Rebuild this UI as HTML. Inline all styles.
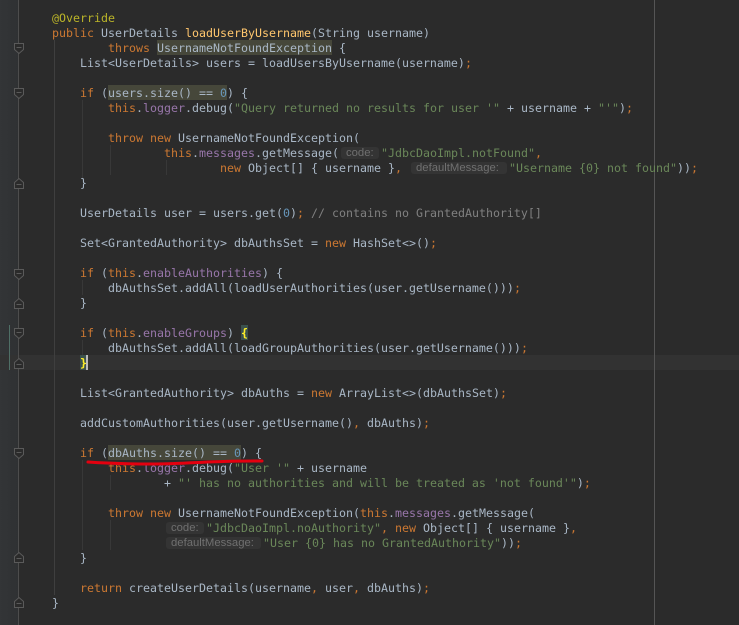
<!DOCTYPE html>
<html><head><meta charset="utf-8"><style>
html,body{margin:0;padding:0;background:#2b2b2b}
#r{position:relative;width:739px;height:625px;overflow:hidden;background:#2b2b2b}
#g{position:absolute;left:0;top:0;width:18px;height:625px;background:linear-gradient(90deg,#333537,#2f3133)}
.b{position:absolute}
#c{position:absolute;left:0;top:0;width:739px;height:625px;filter:blur(.35px)}
.l{position:absolute;left:52px;top:calc(11px + 15px*var(--n));height:15px;line-height:15px;font:11.63px/15px "DejaVu Sans Mono","Liberation Mono",monospace;white-space:pre;color:#a9b7c6}
.k{color:#cc7832}.s{color:#6a8759}.f{color:#9876aa}.a{color:#bbb529}.m{color:#ffc66d}.d{color:#6897bb}.c{color:#808080}
.t{position:absolute;top:calc(12px + 15px*var(--n));height:12px;line-height:12px;font:11.3px/12px "Liberation Sans",sans-serif;color:#707070;background:#343434;border-radius:3px;padding-left:5px;box-sizing:border-box;white-space:pre;overflow:hidden}
</style></head><body><div id="r">
<div id="g"></div>
<div class="b" style="left:0;top:355px;width:739px;height:15px;background:#323232"></div>
<div class="b" style="left:18px;top:0;width:1px;height:625px;background:#4d4d4d"></div>
<div class="b" style="left:54px;top:40px;width:1px;height:555px;background:#3f3f3f"></div>
<div class="b" style="left:654px;top:0;width:1px;height:625px;background:#555"></div>
<div class="b" style="left:82px;top:100px;width:1px;height:78px;background:#383838"></div>
<div class="b" style="left:110px;top:145px;width:1px;height:30px;background:#383838"></div>
<div class="b" style="left:166px;top:160px;width:1px;height:15px;background:#383838"></div>
<div class="b" style="left:82px;top:280px;width:1px;height:15px;background:#383838"></div>
<div class="b" style="left:82px;top:340px;width:1px;height:15px;background:#383838"></div>
<div class="b" style="left:82px;top:460px;width:1px;height:90px;background:#383838"></div>
<div class="b" style="left:110px;top:475px;width:1px;height:15px;background:#383838"></div>
<div class="b" style="left:110px;top:520px;width:1px;height:30px;background:#383838"></div>
<div class="b" style="left:9px;top:325px;width:1px;height:45px;background:#4f6f66"></div>
<div class="b" style="left:157px;top:40px;width:175px;height:15px;background:#46473a"></div>
<div class="b" style="left:108px;top:85px;width:119px;height:15px;background:#46473a"></div>
<div class="b" style="left:108px;top:445px;width:133px;height:15px;background:#46473a"></div>
<div class="b" style="left:241px;top:325px;width:7px;height:15px;background:#3b514d"></div>
<div class="b" style="left:80px;top:355px;width:7px;height:15px;background:#3b514d"></div>
<div class="b" style="left:86px;top:355px;width:2px;height:15px;background:#bbbbbb"></div>
<svg class="b" style="left:0;top:0" width="30" height="625" fill="#2b2b2b" stroke="#5a5a5a" stroke-width="1">
<path d="M14.500 43.500h9v6l-4.500 4-4.500-4zM16.500 47.500h5"/>
<path d="M14.500 88.500h9v6l-4.500 4-4.500-4zM16.500 92.500h5"/>
<path d="M14.500 188.500h9v-6l-4.500-4-4.500 4zM16.500 184.500h5"/>
<path d="M14.500 269.500h9v6l-4.500 4-4.500-4zM16.500 273.500h5"/>
<path d="M14.500 308.500h9v-6l-4.500-4-4.500 4zM16.500 304.500h5"/>
<path d="M14.500 328.500h9v6l-4.500 4-4.500-4zM16.500 332.500h5"/>
<path d="M14.500 368.500h9v-6l-4.500-4-4.500 4zM16.500 364.500h5"/>
<path d="M14.500 448.500h9v6l-4.500 4-4.500-4zM16.500 452.500h5"/>
<path d="M14.500 562.500h9v-6l-4.500-4-4.500 4zM16.500 558.500h5"/>
<path d="M14.500 607.500h9v-6l-4.500-4-4.500 4zM16.500 603.500h5"/>
</svg>
<div id="c">
<div class="l a" style="--n:0">@Override</div>
<div class="l" style="--n:1"><span class="k">public</span> UserDetails <span class="m">loadUserByUsername</span>(String username)</div>
<div class="l" style="--n:2">        <span class="k">throws</span> UsernameNotFoundException {</div>
<div class="l" style="--n:3">    List&lt;UserDetails&gt; users = loadUsersByUsername(username)<span class="k">;</span></div>
<div class="l" style="--n:5">    <span class="k">if</span> (users.size() == <span class="d">0</span>) {</div>
<div class="l" style="--n:6">        <span class="k">this</span>.<span class="f">logger</span>.debug(<span class="s">"Query returned no results for user '"</span> + username + <span class="s">"'"</span>)<span class="k">;</span></div>
<div class="l" style="--n:8">        <span class="k">throw new</span> UsernameNotFoundException(</div>
<div class="l" style="--n:9">                <span class="k">this</span>.<span class="f">messages</span>.getMessage(</div>
<div class="t" style="--n:9;left:341px;width:38px">code:</div>
<div class="l" style="--n:9;left:381px"><span class="s">"JdbcDaoImpl.notFound"</span><span class="k">,</span></div>
<div class="l" style="--n:10">                        <span class="k">new</span> Object[] { username }<span class="k">,</span></div>
<div class="t" style="--n:10;left:411px;width:96px">defaultMessage:</div>
<div class="l" style="--n:10;left:509px"><span class="s">"Username {0} not found"</span>))<span class="k">;</span></div>
<div class="l" style="--n:11">    }</div>
<div class="l" style="--n:13">    UserDetails user = users.get(<span class="d">0</span>)<span class="k">;</span> <span class="c">// contains no GrantedAuthority[]</span></div>
<div class="l" style="--n:15">    Set&lt;GrantedAuthority&gt; dbAuthsSet = <span class="k">new</span> HashSet&lt;&gt;()<span class="k">;</span></div>
<div class="l" style="--n:17">    <span class="k">if</span> (<span class="k">this</span>.<span class="f">enableAuthorities</span>) {</div>
<div class="l" style="--n:18">        dbAuthsSet.addAll(loadUserAuthorities(user.getUsername()))<span class="k">;</span></div>
<div class="l" style="--n:19">    }</div>
<div class="l" style="--n:21">    <span class="k">if</span> (<span class="k">this</span>.<span class="f">enableGroups</span>) <span style="color:#ffef28;font-weight:bold">{</span></div>
<div class="l" style="--n:22">        dbAuthsSet.addAll(loadGroupAuthorities(user.getUsername()))<span class="k">;</span></div>
<div class="l" style="--n:23">    <span style="color:#ffef28;font-weight:bold">}</span></div>
<div class="l" style="--n:25">    List&lt;GrantedAuthority&gt; dbAuths = <span class="k">new</span> ArrayList&lt;&gt;(dbAuthsSet)<span class="k">;</span></div>
<div class="l" style="--n:27">    addCustomAuthorities(user.getUsername()<span class="k">,</span> dbAuths)<span class="k">;</span></div>
<div class="l" style="--n:29">    <span class="k">if</span> (dbAuths.size() == <span class="d">0</span>) {</div>
<div class="l" style="--n:30">        <span class="k">this</span>.<span class="f">logger</span>.debug(<span class="s">"User '"</span> + username</div>
<div class="l" style="--n:31">                + <span class="s">"' has no authorities and will be treated as 'not found'"</span>)<span class="k">;</span></div>
<div class="l" style="--n:33">        <span class="k">throw new</span> UsernameNotFoundException(<span class="k">this</span>.<span class="f">messages</span>.getMessage(</div>
<div class="t" style="--n:34;left:166px;width:38px">code:</div>
<div class="l" style="--n:34;left:206px"><span class="s">"JdbcDaoImpl.noAuthority"</span><span class="k">, new</span> Object[] { username }<span class="k">,</span></div>
<div class="t" style="--n:35;left:166px;width:95px">defaultMessage:</div>
<div class="l" style="--n:35;left:263px"><span class="s">"User {0} has no GrantedAuthority"</span>))<span class="k">;</span></div>
<div class="l" style="--n:36">    }</div>
<div class="l" style="--n:38">    <span class="k">return</span> createUserDetails(username<span class="k">,</span> user<span class="k">,</span> dbAuths)<span class="k">;</span></div>
<div class="l" style="--n:39">}</div>
</div>
<svg class="b" style="left:0;top:0" width="739" height="625" fill="none"><path d="M88 462C110 463.500 135 464 155 464C180 464 200 462 223 461.500C240 461 250 461 262 461" stroke="#e4000f" stroke-width="3" stroke-linecap="round"/></svg>
</div></body></html>
